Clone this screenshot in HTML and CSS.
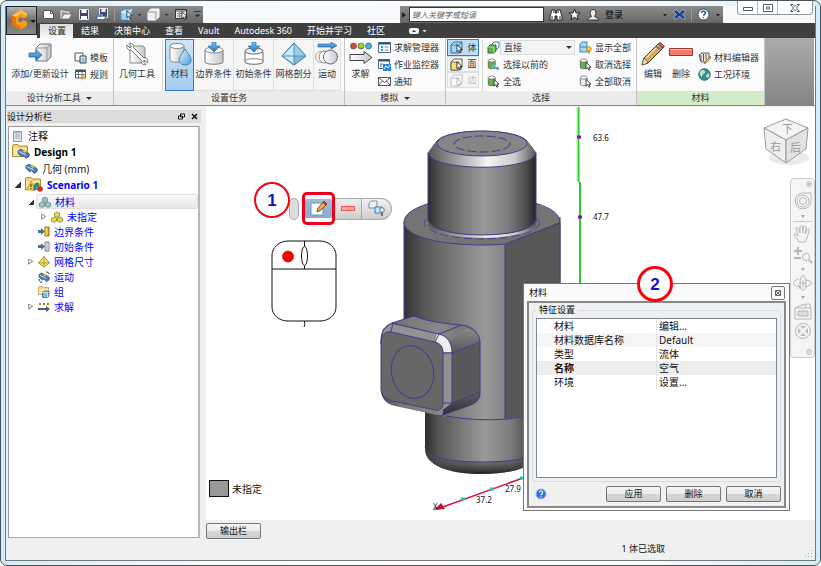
FILE: index.html
```html
<!DOCTYPE html>
<html lang="zh-CN">
<head>
<meta charset="utf-8">
<title>Design 1</title>
<link rel="stylesheet" href="styles.css">
</head>
<body>
<svg class="defs" aria-hidden="true">
  <defs>
    <linearGradient id="gm" x1="0" x2="1" y1="0" y2="0"><stop offset="0" stop-color="#fff"/><stop offset="1" stop-color="#c3c6cb"/></linearGradient>
    <linearGradient id="gb" x1="0" x2="0" y1="0" y2="1"><stop offset="0" stop-color="#7fc4f5"/><stop offset="1" stop-color="#1f74c4"/></linearGradient>
    <linearGradient id="gd" x1="0" x2="1" y1="0" y2="1"><stop offset="0" stop-color="#eaf7ff"/><stop offset="1" stop-color="#4c9fdc"/></linearGradient>
    <linearGradient id="gy" x1="0" x2="1" y1="0" y2="0"><stop offset="0" stop-color="#fff6a0"/><stop offset="1" stop-color="#d0a616"/></linearGradient>
    <symbol id="cursor" viewBox="0 0 8 11"><path d="M1 0.6v8l2-1.8 1.4 3.2 1.5-.7-1.4-3h2.6z" fill="#fff" stroke="#222" stroke-width="1"/></symbol>
    <symbol id="cubes" viewBox="0 0 12 12"><path d="M3 1l2.500 1.200v3L3 6.400.5 5.200v-3z" transform="translate(3 0)" fill="inherit" stroke="#5b6b2a" stroke-width=".6"/><path d="M3 6l2.500 1.200v3L3 11.400.5 10.200v-3z" fill="inherit" stroke="#5b6b2a" stroke-width=".6"/><path d="M9 6l2.500 1.200v3L9 11.400 6.500 10.200v-3z" fill="inherit" stroke="#5b6b2a" stroke-width=".6"/></symbol>
    <symbol id="part" viewBox="0 0 12 12"><path d="M1 3.500 3.500 2l6 3 2 1.500-.5 2.500-2.500 1.500L6 8 4.500 9 2.500 7.500 1 6z" fill="#4e7fae" stroke="#2c4f75" stroke-width=".7"/><path d="M5 4l2-1.500 2 1-1.500 2z" fill="#e8c92e"/><path d="M2 4.200l6 3.200" stroke="#b9d5ee" stroke-width="1"/></symbol>
    <symbol id="folder" viewBox="0 0 16 13"><path d="M.5 12.500V1.500L2 .5h4l1.500 1.500h8v10.500z" fill="#f5d27a" stroke="#b98b2e"/><path d="M1.500 4h13v7.500h-13z" fill="#fde9ae"/></symbol>
    <symbol id="db" viewBox="0 0 13 14"><path d="M1 3v8c0 2 8 2 8 0V3" fill="inherit" stroke="#555" stroke-width=".9"/><ellipse cx="5" cy="3" rx="4" ry="1.800" fill="#fff" stroke="#666" stroke-width=".9"/></symbol>
  </defs>
</svg>

<div class="window">
 <div class="frame">
  <header class="header">
    <button class="app-btn" aria-label="应用程序">
      <svg width="30" height="28" viewBox="0 0 30 28"><path d="M17 4.500 14 3 5 8.500V18l8.500 4.500L20 19v-4.500l-4-1.500-2.500 2.500-2-1.200V11l2-1.200L17 11.500l3-2V6.500L17 4.500z" fill="#f79a1c"/><path d="M5 8.500 9 10v7l4.500 2.500V22.500L5 18z" fill="#e8740c"/><path d="M9 10 14 6.500l6 2.500v-2.500L14 3 5 8.500z" fill="#ffc04a"/><path d="M23.500 13h5l-2.500 3z" fill="#111"/></svg>
    </button>
    <div class="titlebar">
      <div class="qat">
        <button aria-label="新建"><svg width="13" height="13" viewBox="0 0 13 13"><path d="M1.500 2.500h7l3 3v5h-10z" fill="#fff" stroke="#555"/><path d="M8.500 2.500v3h3" fill="none" stroke="#555"/></svg></button>
        <button aria-label="打开"><svg width="13" height="13" viewBox="0 0 13 13"><path d="M1 11V3h3l1 1h4v2" fill="#999" stroke="#eee"/><path d="M1 11l3-5h8l-3 5z" fill="#eee" stroke="#555" stroke-width=".6"/></svg></button>
        <button aria-label="保存"><svg width="13" height="13" viewBox="0 0 13 13"><path d="M1.500 1.500h9v10h-9z" fill="#3f4a5c" stroke="#e3e6ea"/><path d="M3.500 2h5v3h-5zM3 8h6v3H3z" fill="#fff"/></svg></button>
        <button aria-label="全部保存"><svg width="13" height="13" viewBox="0 0 13 13"><path d="M3.500.5h8v9h-8z" fill="#3f4a5c" stroke="#e3e6ea"/><path d="M5.500 1h4v3h-4z" fill="#fff"/><path d="M1 8h8v3.500H1z" fill="#fff" stroke="#23569b" stroke-width=".8"/><path d="M2 6h5v3H2z" fill="#5d8dc4"/></svg></button>
        <i class="qsep"></i>
        <button aria-label="体选择"><svg width="22" height="13" viewBox="0 0 22 13"><path d="M1 4l3-3h8v8l-3 3H1z" fill="#9fd6f8" stroke="#4393c8"/><path d="M1 4h8v8M9 4l3-3" fill="none" stroke="#fff"/><use href="#cursor" x="6" y="2" width="7" height="10"/><path d="M17.500 6h4l-2 2z" fill="#333"/></svg></button>
        <button aria-label="外观"><svg width="22" height="13" viewBox="0 0 22 13"><path d="M1 4l3-3h8v8l-3 3H1z" fill="#eee" stroke="#fff"/><path d="M1 4h8v8" fill="none" stroke="#999"/><path d="M17.500 6h4l-2 2z" fill="#333"/></svg></button>
        <button aria-label="表格"><svg width="14" height="13" viewBox="0 0 14 13"><path d="M1.500 1.500h11v9h-11z" fill="#eee" stroke="#333"/><path d="M2 3h10" stroke="#444"/><path d="M3 5.500h6M3 8h5M5.500 4v6" stroke="#888"/><use href="#cursor" x="7" y="3" width="7" height="10"/></svg></button>
        <button aria-label="自定义"><svg width="9" height="8" viewBox="0 0 9 8"><path d="M1 .5h7" stroke="#333"/><path d="M1 3h7L4.500 7z" fill="#333" stroke="#999" stroke-width=".5"/></svg></button>
      </div>
      <div class="infobar">
        <svg width="8" height="10" viewBox="0 0 8 10"><path d="M2 2l4 3-4 3z" fill="#222"/></svg>
        <input class="search" type="text" aria-label="搜索" placeholder="键入关键字或短语">
        <button aria-label="查找"><svg width="14" height="14" viewBox="0 0 14 14"><path d="M3 2h3v3h2V2h3l2 6v4H8V8H6v4H1V8z" fill="#fff" stroke="#222"/><path d="M3 8v3M11 8v3M4 4h1M9 4h1" stroke="#222"/></svg></button>
        <button aria-label="收藏"><svg width="13" height="13" viewBox="0 0 13 13"><path d="M6.500 1l1.500 4h4L9 7.500l1 4.200-3.500-2.500L3 11.700l1-4.200L1 5h4z" fill="#fff" stroke="#222"/></svg></button>
        <button aria-label="用户"><svg width="14" height="14" viewBox="0 0 14 14"><path d="M1.500 12c0-3 4-2 4-4C3 6 4 1.500 7 1.500S11 6 8.500 8c0 2 4 1 4 4z" fill="#eee" stroke="#333"/></svg></button>
        <button class="login">登录</button>
        <span class="grow"></span>
        <svg width="6" height="8" viewBox="0 0 6 8"><path d="M1 3h4L3 5.500z" fill="#222"/></svg>
        <button aria-label="Exchange"><svg width="13" height="13" viewBox="0 0 13 13"><path d="M1 2h3l2.500 3L9 2h3v2L9.500 6.500 12 9v2H9L6.500 8 4 11H1V9l2.500-2.500L1 4z" fill="#1d4496" stroke="#c6d2ea" stroke-width=".6"/></svg></button>
        <i class="qsep"></i>
        <button aria-label="帮助"><svg width="13" height="13" viewBox="0 0 13 13"><circle cx="6.500" cy="6.500" r="5.500" fill="#fff" stroke="#2d4567"/><path d="M4.500 5c0-2.500 4-2.300 4 0 0 1.400-2 1.300-2 2.800M6.500 9v1.300" fill="none" stroke="#24508f" stroke-width="1.400"/></svg></button>
        <svg width="6" height="8" viewBox="0 0 6 8"><path d="M1 3h4L3 5.500z" fill="#222"/></svg>
      </div>
      <div class="wincontrols">
        <button aria-label="最小化"><svg width="10" height="8"><path d="M.5 3.500h9v3h-9z" fill="#fff" stroke="#555a66"/></svg></button>
        <button aria-label="最大化"><svg width="10" height="8"><path d="M.5.500h9v7h-9zM3.500 3h3v2h-3z" fill="#fff" stroke="#555a66"/></svg></button>
        <button aria-label="关闭" class="wc-close"><svg width="10" height="8"><path d="M.5.500h2.500l2 2 2-2h2.500L6.500 4l3 3.500H7l-2-2-2 2H.5l3-3.500z" fill="#fff" stroke="#555a66"/></svg></button>
      </div>
    </div>
    <nav class="tabs">
      <a href="#" class="tab active">设置</a><a href="#" class="tab">结果</a><a href="#" class="tab">决策中心</a><a href="#" class="tab">查看</a><a href="#" class="tab">Vault</a><a href="#" class="tab">Autodesk 360</a><a href="#" class="tab">开始并学习</a><a href="#" class="tab">社区</a>
      <button class="tab-toggle" aria-label="折叠功能区"><svg width="18" height="8" viewBox="0 0 18 8"><rect x="0" y="1" width="10" height="6" rx="2" fill="#eee"/><path d="M3 5h4L5 3z" fill="#333"/><path d="M13.500 3h4l-2 2.500z" fill="#ddd"/></svg></button>
    </nav>
  </header>

  <div class="ribbon">
    <section class="panel">
      <div class="panel-body p-design">
        <button class="big wide"><svg width="24" height="24" viewBox="0 0 24 24"><path d="M8 6l4-4h11v13l-4 4H8z" fill="url(#gm)" stroke="#777"/><path d="M8 6h11v13M19 6l4-4" fill="none" stroke="#999"/><path d="M1 11h7V7.500l6 5.500-6 5.500V15H1z" fill="url(#gb)" stroke="#1a5a9c" stroke-width=".7"/></svg><span>添加/更新设计</span></button>
        <div class="list two">
          <button class="row"><svg width="13" height="13" viewBox="0 0 13 13"><path d="M1 2h8v8H1z" fill="#fff" stroke="#555"/><path d="M6 5h6v7H6z" fill="#d8e8f8" stroke="#345"/><path d="M7.500 8h3M7.500 10h3" stroke="#4c8ac5"/></svg>模板</button>
          <button class="row"><svg width="13" height="13" viewBox="0 0 13 13"><path d="M1.500 2h10v8h-10z" fill="#fff" stroke="#456"/><path d="M1 2h11v2H1z" fill="#456"/><path d="M2 6.500h9M4.500 4v6M8 4v6" stroke="#678"/><path d="M12 5L7 9h2l-2 4 5-4h-2z" fill="#f7a51c"/></svg>规则</button>
        </div>
      </div>
      <h2 class="panel-title">设计分析工具 <i class="caret"></i></h2>
    </section>
    <section class="panel">
      <div class="panel-body p-task">
        <button class="big tools"><svg width="24" height="24" viewBox="0 0 24 24"><path d="M5 4h13l2 2v13l-2 2H5z" fill="url(#gm)" stroke="#888"/><path d="M2 3l3 3 1.500-1.500L4 1.500c3-1 5 1 4.500 4L19 16c3-.5 4.500 2 3.500 5l-3-3-1.500 1.500 3 3c-3 1-5.500-1-4.500-4L6 8C3 8.500 1 6 2 3z" fill="#fff" stroke="#555" stroke-width=".8"/></svg><span>几何工具</span></button>
        <i class="vsep"></i>
        <button class="big tile mat on" aria-pressed="true"><svg width="24" height="24" viewBox="0 0 24 24"><path d="M2 4v14c0 3 14 3 14 0V4" fill="url(#gm)" stroke="#888"/><ellipse cx="9" cy="4" rx="7" ry="2.500" fill="#fff" stroke="#888"/><path d="M17 7c3 5 6 7 6 11s-3 5-6 5-6-2-6-5 3-6 6-11z" fill="url(#gd)" stroke="#3d82b8"/></svg><span>材料</span></button>
        <button class="big tile"><svg width="24" height="24" viewBox="0 0 24 24"><path d="M3 8v12c0 3 18 3 18 0V8" fill="url(#gm)" stroke="#777"/><ellipse cx="12" cy="8" rx="9" ry="3" fill="#fff" stroke="#888"/><path d="M10 0h4v4h4l-6 6-6-6h4z" fill="url(#gb)" stroke="#1a5a9c" stroke-width=".6"/></svg><span>边界条件</span></button>
        <button class="big tile"><svg width="24" height="24" viewBox="0 0 24 24"><path d="M3 10v10c0 3 18 3 18 0V10" fill="#fff" stroke="#666"/><ellipse cx="12" cy="9" rx="9" ry="3" fill="#eee" stroke="#666"/><path d="M3 19c0-3 18-3 18 0" fill="none" stroke="#888"/><path d="M10 0h4v4h4l-6 6-6-6h4z" fill="url(#gb)" stroke="#1a5a9c" stroke-width=".6"/></svg><span>初始条件</span></button>
        <button class="big tile"><svg width="26" height="24" viewBox="0 0 26 24"><path d="M13 1l12 13-12 9L1 14z" fill="#c9e8f8" stroke="#3f84b0"/><path d="M13 1l12 13H13z" fill="#9dcde8"/><path d="M13 14h12l-12 9z" fill="#7fb8d9"/><path d="M13 1v22M1 14h24M13 1l12 13-12 9L1 14z" fill="none" stroke="#3f84b0" stroke-width=".8"/></svg><span>网格剖分</span></button>
        <button class="big tile motion"><svg width="24" height="24" viewBox="0 0 24 24"><path d="M3 2h13V0l6 3.500-6 3.500V5H3z" fill="url(#gb)" stroke="#1a5a9c" stroke-width=".6"/><circle cx="6" cy="15" r="5.500" fill="none" stroke="#aaa"/><circle cx="10" cy="15" r="6" fill="#fff" stroke="#888"/><circle cx="15.500" cy="15" r="7" fill="url(#gm)" stroke="#666"/></svg><span>运动</span></button>
      </div>
      <h2 class="panel-title">设置任务</h2>
    </section>
    <section class="panel">
      <div class="panel-body p-sim">
        <button class="big solve"><svg width="24" height="24" viewBox="0 0 24 24"><circle cx="4.500" cy="4" r="3" fill="#e0493a" stroke="#555" stroke-width=".8"/><circle cx="12" cy="4" r="3" fill="#7ed321" stroke="#555" stroke-width=".8"/><circle cx="19.500" cy="4" r="3" fill="#3fb4e6" stroke="#555" stroke-width=".8"/><path d="M11 2a2 2 0 0 1 2 3" stroke="#fd3" fill="none"/><path d="M1 12.500h14v-3l8 6-8 6v-3H1z" fill="url(#gm)" stroke="#444"/></svg><span>求解</span></button>
        <div class="list">
          <button class="row"><svg width="13" height="13" viewBox="0 0 13 13"><path d="M.5 1.500h12v10H.5z" fill="#fff" stroke="#468"/><path d="M1 1.500h11v2H1z" fill="#357"/><path d="M3 6h2M3 9h2" stroke="#29d" stroke-width="2"/><path d="M6.500 6h4M6.500 9h4" stroke="#789"/></svg>求解管理器</button>
          <button class="row"><svg width="13" height="13" viewBox="0 0 13 13"><path d="M.5 1.500h11v9H.5z" fill="#fff" stroke="#468"/><path d="M1 1.500h11v2H1z" fill="#357"/><path d="M2 6h3M2 8h2" stroke="#468"/><path d="M5 6h8v7H5z" fill="#2b86dd"/><path d="M6 11l2-3 2 2 2-3" fill="none" stroke="#fff"/></svg>作业监控器</button>
          <button class="row"><svg width="13" height="13" viewBox="0 0 13 13"><path d="M.5 2.500h12v8H.5zM.5 2.500l6 5 6-5M.5 10.500l4-4.500M12.500 10.500l-4-4.500" fill="#fff" stroke="#444" stroke-width=".9"/></svg>通知</button>
        </div>
      </div>
      <h2 class="panel-title">模拟 <i class="caret"></i></h2>
    </section>
    <section class="panel">
      <div class="panel-body p-select">
        <div class="toggles">
          <button class="toggle on" aria-pressed="true"><svg width="14" height="13" viewBox="0 0 14 13"><path d="M1 4l3-3h8v8l-3 3H1z" fill="#9fd6f8" stroke="#2f6b99"/><path d="M1 4h8v8M9 4l3-3" fill="none" stroke="#2f6b99" stroke-width=".7"/><use href="#cursor" x="6" y="3" width="7" height="10"/></svg>体</button>
          <button class="toggle"><svg width="14" height="13" viewBox="0 0 14 13"><path d="M1 4l3-3h8v8l-3 3H1z" fill="#fff" stroke="#555"/><path d="M1 4h8v8H1z" fill="#f8dc6b" stroke="#555" stroke-width=".8"/><use href="#cursor" x="6" y="3" width="7" height="10"/></svg>面</button>
          <button class="toggle" disabled><svg width="14" height="13" viewBox="0 0 14 13"><path d="M1 4l3-3h8v8l-3 3H1z" fill="#fff" stroke="#bbb"/><path d="M1 4h8v8" fill="none" stroke="#bbb"/><path d="M7 4v8l2-2h3z" fill="#fff" stroke="#bbb"/></svg>边</button>
        </div>
        <i class="vsep"></i>
        <div class="list sel">
          <div class="row"><svg width="13" height="13" viewBox="0 0 13 13"><path d="M5 3l2-2h5v5l-2 2H5z" fill="none" stroke="#2f78b5"/><path d="M1 6l2-2h6v6l-2 2H1z" fill="#5fb54b" stroke="#2d6c22"/><path d="M1 6h6v6" fill="none" stroke="#c5eab9" stroke-width=".8"/></svg><select aria-label="选择方式"><option>直接</option></select></div>
          <button class="row"><svg width="13" height="13" viewBox="0 0 13 13"><use href="#db" width="12" height="12" fill="#62b24e"/><path d="M12 12V9H8V7L5 9.500 8 12v-1.500" fill="#2b86dd" stroke="#fff" stroke-width=".5"/></svg>选择以前的</button>
          <button class="row"><svg width="13" height="13" viewBox="0 0 13 13"><use href="#db" width="12" height="12" fill="#62b24e"/><use href="#cursor" x="6" y="4" width="7" height="9"/></svg>全选</button>
        </div>
        <div class="list">
          <button class="row"><svg width="13" height="13" viewBox="0 0 13 13"><path d="M1 3l2-2h5v10H1z" fill="#a8daf8" stroke="#3a84b8"/><path d="M1 6h7" stroke="#3a84b8"/><circle cx="10" cy="8" r="2.300" fill="#fc5" stroke="#d80"/><path d="M10 10v2.500" stroke="#777" stroke-width="1.500"/></svg>显示全部</button>
          <button class="row"><svg width="13" height="13" viewBox="0 0 13 13"><use href="#db" width="12" height="12" fill="#62b24e"/><use href="#cursor" x="6" y="4" width="7" height="9"/></svg>取消选择</button>
          <button class="row"><svg width="13" height="13" viewBox="0 0 13 13"><use href="#db" width="12" height="12" fill="#eee"/><use href="#cursor" x="6" y="4" width="7" height="9"/></svg>全部取消</button>
        </div>
      </div>
      <h2 class="panel-title">选择</h2>
    </section>
    <section class="panel">
      <div class="panel-body p-mat">
        <button class="big act"><svg width="24" height="24" viewBox="0 0 24 24"><path d="M1 23l2-7L17 2l5 4L7 21z" fill="#d9a860" stroke="#4a3a20"/><path d="M5 16L18 3" stroke="#f6dca8" stroke-width="1.500"/><path d="M17 2l2-1.500 4.500 4L22 6z" fill="#c66" stroke="#733"/><path d="M15 4l5 4" stroke="#777" stroke-width="2"/><path d="M3 16l4 5-6 2z" fill="#f6e6c8" stroke="#333" stroke-width=".6"/></svg><span>编辑</span></button>
        <button class="big act"><svg width="24" height="24" viewBox="0 0 24 24"><path d="M.5 6.500h23v7H.5z" fill="#fb7870" stroke="#8e3b35"/><path d="M1 7.500h22" stroke="#ffb0aa"/></svg><span>删除</span></button>
        <div class="list two">
          <button class="row"><svg width="13" height="13" viewBox="0 0 13 13"><path d="M1 4l3-2h7v6l-3 3H3z" fill="#eee" stroke="#555"/><path d="M3 4v6M5.500 3v7M8 3v6" stroke="#555"/><path d="M12.500 5L7 11l-1 2 2-1 5-5z" fill="#f3ab4a" stroke="#8a5618" stroke-width=".6"/></svg>材料编辑器</button>
          <button class="row"><svg width="13" height="13" viewBox="0 0 13 13"><circle cx="6.500" cy="6.500" r="5.700" fill="#3a8f9b" stroke="#245f73"/><path d="M2 4c2-3 5-2 5 0S4 6 4 8 1 7 2 4zM8 7l3-2c1 2 0 5-2 5z" fill="#bfe8c3"/></svg>工况环境</button>
        </div>
      </div>
      <h2 class="panel-title green">材料</h2>
    </section>
    <div class="ribbon-rest"></div>
  </div>

  <main class="main">
    <aside class="side">
      <div class="side-title"><span>设计分析栏</span><button aria-label="浮动"><svg width="7" height="7" viewBox="0 0 7 7"><path d="M2.500 1h4v3h-4zM.5 3h4v3h-4z" fill="#fff" stroke="#111"/></svg></button><button aria-label="关闭"><svg width="7" height="7" viewBox="0 0 7 7"><path d="M1 1l5 5M6 1L1 6" stroke="#111" stroke-width="1.500"/></svg></button></div>
      <ul class="tree">
        <li class="n l0"><svg width="12" height="12" viewBox="0 0 12 12"><path d="M1.500 1.500h8v10h-8z" fill="#e4ecf3" stroke="#8299ad"/><path d="M3 4h5M3 6h5M3 8h5M2 1v2M4 1v2M6 1v2M8 1v2" stroke="#7c93a8" stroke-width=".8"/></svg><span>注释</span></li>
        <li class="n l0 big-row"><svg width="18" height="16" viewBox="0 0 18 16"><use href="#folder" width="16" height="13"/><use href="#part" x="5" y="3" width="13" height="13"/></svg><b>Design 1</b></li>
        <li class="n l1"><svg width="13" height="13"><use href="#part" width="13" height="13"/></svg><span>几何 (mm)</span></li>
        <li class="n l1 big-row blue exp"><i class="open"></i><svg width="18" height="16" viewBox="0 0 18 16"><use href="#folder" width="16" height="13"/><path d="M6 4l4.500 9h-9z" fill="#ffd91c" stroke="#a67a00" stroke-width=".7"/><path d="M6 7v3M6 11v1" stroke="#222"/><circle cx="12" cy="8" r="2.500" fill="#259644"/><circle cx="15" cy="12" r="2.800" fill="#d22d22"/><path d="M9 6l3 6-4 2z" fill="#3478c0"/></svg><b>Scenario 1</b></li>
        <li class="n l2 blue exp sel"><i class="open"></i><span class="hl"><svg width="12" height="12" fill="#8cc4e8"><use href="#cubes" width="12" height="12"/></svg><span>材料</span></span></li>
        <li class="n l3 blue exp"><i class="closed"></i><svg width="12" height="12" fill="#ecd445"><use href="#cubes" width="12" height="12"/></svg><span>未指定</span></li>
        <li class="n l2 blue exp"><i></i><svg width="12" height="12" viewBox="0 0 12 12"><path d="M7 1h4v9H7z" fill="url(#gy)" stroke="#927200"/><path d="M0 4h3V2l4 3.500L3 9V7H0z" fill="#4b7290"/></svg><span>边界条件</span></li>
        <li class="n l2 blue exp"><i></i><svg width="12" height="12" viewBox="0 0 12 12"><path d="M7 1h4v9H7z" fill="#fff" stroke="#777"/><path d="M9 1v9" stroke="#999"/><path d="M0 4h3V2l4 3.500L3 9V7H0z" fill="#4b7290"/></svg><span>初始条件</span></li>
        <li class="n l2 blue exp"><i class="closed"></i><svg width="12" height="12" viewBox="0 0 12 12"><path d="M6 .500L11.500 7 6 11 .5 7z" fill="#f3e46a" stroke="#8a7a18" stroke-width=".8"/><path d="M6 .500V11M.5 7h11" stroke="#8a7a18" stroke-width=".6"/></svg><span>网格尺寸</span></li>
        <li class="n l2 blue exp"><i></i><svg width="12" height="12" viewBox="0 0 12 12"><use href="#part" width="12" height="12"/><path d="M8 1c2 0 3 1 3.500 2M1 8c0 2 1 3 3 3.500" fill="none" stroke="#234"/></svg><span>运动</span></li>
        <li class="n l2 blue exp"><i></i><svg width="12" height="12" viewBox="0 0 12 12"><use href="#folder" width="11" height="9"/><path d="M4.500 6.500l1.500-1.500h5v5l-1.500 1.500h-5z" fill="#83b9dd" stroke="#3d6d91" stroke-width=".8"/><path d="M4.500 6.500h5v5" fill="none" stroke="#e5f4ff" stroke-width=".7"/></svg><span>组</span></li>
        <li class="n l2 blue exp"><i class="closed"></i><svg width="12" height="12" viewBox="0 0 12 12"><path d="M1 3h2M5 3h2M9 3h2" stroke="#a58a20" stroke-width="2"/><path d="M0 7h8V5l4 3-4 3V9H0z" fill="#48616e"/></svg><span>求解</span></li>
      </ul>
    </aside>

    <div class="work">
      <div class="canvas">
        <svg class="scene" width="610" height="413" viewBox="206 107 610 413">
          <defs>
            <linearGradient id="cyl"><stop offset="0" stop-color="#2e2e2e"/><stop offset=".12" stop-color="#555"/><stop offset=".35" stop-color="#7e7e7e"/><stop offset=".52" stop-color="#999"/><stop offset=".75" stop-color="#7c7c7c"/><stop offset=".92" stop-color="#484848"/><stop offset="1" stop-color="#222"/></linearGradient>
            <linearGradient id="body"><stop offset="0" stop-color="#333"/><stop offset=".12" stop-color="#555"/><stop offset=".4" stop-color="#868686"/><stop offset=".52" stop-color="#999"/><stop offset=".65" stop-color="#858585"/></linearGradient>
            <linearGradient id="cham"><stop offset="0" stop-color="#555"/><stop offset=".3" stop-color="#aaa"/><stop offset=".55" stop-color="#f5f5f5"/><stop offset=".8" stop-color="#ccc"/><stop offset="1" stop-color="#555"/></linearGradient>
            <linearGradient id="fil" x1="0" x2="0" y1="0" y2="1"><stop offset="0" stop-color="#777" stop-opacity="0"/><stop offset=".7" stop-color="#333" stop-opacity=".6"/><stop offset="1" stop-color="#222"/></linearGradient>
            <linearGradient id="btop" x1="0" x2="1" y1="0" y2="0"><stop offset="0" stop-color="#444"/><stop offset=".2" stop-color="#777"/><stop offset=".6" stop-color="#888"/><stop offset=".85" stop-color="#777"/><stop offset="1" stop-color="#444"/></linearGradient>
            <linearGradient id="bside" x1="0" x2="0" y1="0" y2="1"><stop offset="0" stop-color="#8a8a8a"/><stop offset=".3" stop-color="#555"/><stop offset=".8" stop-color="#555"/><stop offset="1" stop-color="#2c2c2c"/></linearGradient>
          </defs>
          <path d="M578.500 107v75M580 182v105" stroke="#2cc82c" stroke-width="2"/>
          <path d="M577 107v75" stroke="#a9efa9"/>
          <path d="M577 137h4M578 217h4" stroke="#90c" stroke-width="3"/>
          <path d="M425 400v50c1 14 20 24 57 24s57-10 57-24v-50z" fill="url(#cyl)"/>
          <path d="M425 447c4 11 25 15 57 15s53-4 57-15v3c0 14-20 24-57 24s-56-10-57-24z" fill="url(#fil)"/>
          <path d="M425 447c4 11 25 15 57 15s53-4 57-15" class="edge"/>
          <path d="M404 222v170c10 20 40 28 78 28 45 0 78-8 78-25V224l-55 20z" fill="url(#body)"/>
          <path d="M505 244l55.500-27v175c-8 18-28 24-55.500 27z" fill="#585858"/>
          <path d="M404 222c0-14 34-25 78-25s78 11 78 25l-55 22c-10 1-16 1-23 1-44 0-78-9-78-23z" fill="#747474"/>
          <path d="M404 394V222c0-14 34-25 78-25s78 10 78 25v170M404 222c0 14 34 23 78 23 8 0 15 0 23-1l55-21M505 244v175M446 416c28 5 60 5 80 0" class="edge"/>
          <ellipse cx="482" cy="223" rx="57.500" ry="16" fill="#777" stroke="#443a90" stroke-width=".8" stroke-dasharray="9 3"/>
          <path d="M428 220c0 20 108 20 108 0v5c-6 17-102 17-108 0z" fill="url(#cham)"/>
          <path d="M428 153v67c2 10 24 15 54 15s52-5 54-15v-67z" fill="url(#cyl)"/>
          <path d="M428 222V153l9-12c10-13 80-13 90 0l9 12v69" fill="none" stroke="#443a90"/>
          <path d="M428 153l9-12h90l9 12c-4 19-104 19-108 0z" fill="url(#cham)"/>
          <ellipse cx="482" cy="143.500" rx="45" ry="12.500" fill="#858585" stroke="#443a90"/>
          <ellipse cx="482" cy="144" rx="28" ry="8" fill="none" stroke="#443a90" stroke-dasharray="9 3"/>
          <path d="M428 153c4 19 104 19 108 0M428 220c6 20 102 20 108 0" class="edge"/>
          <path d="M381 344c0-13 2-17 11-21l22-7c14 6 30 7 46 9 12 0 20 9 20 17v51c0 7-4 10-12 13l-25 9c-2 1-4 1-6 0l-42-9c-9-2-14-8-14-16z" fill="url(#btop)"/>
          <path d="M443 345l24-17c8 2 13 7 13 14v51c0 7-4 10-12 13l-25 9z" fill="url(#bside)"/>
          <path d="M452 353l28-10v51l-28 9z" fill="#595959"/>
          <path d="M392 324c-7 2-11 9-11 19l2 47 57 22 12-9v-50c-1-9-4-16-12-18z" fill="#929292"/>
          <path d="M437 334c9 1 14 7 15 18h-9c0-6-3-9-8-10z" fill="#ededed"/>
          <path d="M391 332l44 10c6 2 8 5 8 11v50c0 6-3 8-8 7l-42-9c-8-2-12-6-12-12v-47c0-7 4-11 10-10z" fill="#676767"/>
          <path d="M391 332l44 10c6 2 8 5 8 11v50c0 6-3 8-8 7l-42-9c-8-2-12-6-12-12v-47c0-7 4-11 10-10zM381 344c0-13 2-17 11-21l22-7c14 6 30 7 46 9 12 0 20 9 20 17v51c0 7-4 10-12 13l-25 9c-2 1-4 1-6 0M392 323l47 11c9 2 13 9 13 19v50l-10 12M439 334l23-9M452 353l28-11M452 403l28-11M443 353h9M443 403h9M391 332l2-9M435 342l4-8" class="edge"/>
          <ellipse cx="412.500" cy="372" rx="21" ry="26.500" fill="none" stroke="#443a90" transform="rotate(-12 412.500 372)"/>
          <path d="M523 478l-83 30" stroke="#d8123f" stroke-width="1.500"/><path d="M434 510l7-7 4 6z" fill="#c4122f"/>
          <path d="M490 489h4M461 499h4M520 478h4" stroke="#14c8c8" stroke-width="3"/>
          <g class="scale"><text x="593" y="141">63.6</text><text x="593" y="220">47.7</text><text x="476" y="503">37.2</text><text x="505" y="492">27.9</text><text x="433" y="510">X</text></g>
          <g stroke="#111" fill="#fff"><path d="M288 241h32c9 0 16 7 16 14v52c0 8-7 14-16 14h-32c-9 0-16-6-16-14v-52c0-7 7-14 16-14z"/><path d="M272 269h64M304.500 241v28M304.500 321q1 4-.500 6" fill="none"/><ellipse cx="304.500" cy="256" rx="3" ry="9.500"/><circle cx="288" cy="256.500" r="5.500" fill="#f00" stroke="#900" stroke-width=".6"/></g>
        </svg>

        <div class="mini">
          <span class="grip"></span>
          <button class="m-edit" aria-label="编辑材料"><svg width="17" height="17" viewBox="0 0 17 17"><path d="M1 3h12v12H1z" fill="#fff" stroke="#6f94be"/><path d="M14 1l3 3-6 6-4 2 1-4z" fill="#eeb04e" stroke="#4b3210" stroke-width=".8"/><path d="M14 1l3 3-1.500 1.500-3-3z" fill="#b33"/></svg></button>
          <button class="m-del" aria-label="删除材料"><svg width="14" height="5"><path d="M.5.500h13v4H.5z" fill="#fba19b" stroke="#e55"/></svg></button>
          <button class="m-more" aria-label="隐藏"><svg width="17" height="17" viewBox="0 0 17 17"><path d="M1 3l2-2h6v5L7 8H1z" fill="#eee" stroke="#888"/><path d="M7 7h7v6H7z" fill="#cfe8fb" stroke="#2d7fc2"/><circle cx="14" cy="10" r="2.300" fill="#eef8ff" stroke="#2d7fc2"/><path d="M14 12v4" stroke="#777" stroke-width="2"/></svg></button>
        </div>
        <span class="mark m1">1</span>

        <svg class="viewcube" width="50" height="52" viewBox="0 0 50 52"><ellipse cx="27" cy="41" rx="20" ry="7" fill="#ddd" opacity=".6"/><path d="M2 11L24 2l22 9-22 12z" fill="#f4f4f4" stroke="#999"/><path d="M2 11l22 12v23L4 32z" fill="#eee" stroke="#999"/><path d="M46 11L24 23v23l20-14z" fill="#e2e2e2" stroke="#999"/><text x="20" y="16">下</text><text x="8" y="34">右</text><text x="28" y="35">后</text></svg>

        <nav class="navbar" aria-label="导航栏">
          <svg class="tiny first" width="6" height="6" viewBox="0 0 6 6"><circle cx="3" cy="3" r="2.400"/><path d="M2 2l2 2M4 2L2 4"/></svg>
          <button aria-label="导航控制盘"><svg width="20" height="20" viewBox="0 0 20 20"><path d="M10 2h8v8a8 8 0 1 1-8-8z"/><circle cx="10" cy="10" r="6"/><circle cx="10" cy="10" r="3.500"/></svg></button>
          <i class="dn"></i><i class="line"></i>
          <button aria-label="平移"><svg width="20" height="20" viewBox="0 0 20 20"><path d="M6 18c-1-3-4-5-5-7 0-2 2-1 4 1L3 5c0-2 2-2 2.500 0L7 9V3c0-2 2.500-2 2.500 0v6l1-6c.5-2 2.500-1 2.500 1l-1 6 2-4c1-2 3-1 2 1l-2 7-2 4z"/></svg></button>
          <button aria-label="缩放"><svg width="20" height="18" viewBox="0 0 20 18"><path d="M5 1v8M1 5h8M1 12h7" stroke-width="2"/><circle cx="13" cy="11" r="3.500"/><path d="M16 14l3 3" stroke-width="2"/></svg></button>
          <i class="dn"></i>
          <button aria-label="动态观察"><svg width="20" height="18" viewBox="0 0 20 18"><path d="M6 5c-8 2-7 7 1 8M5 11l2 2-2 2M13 6c7 1 7 5 0 7"/><ellipse cx="10" cy="9" rx="3" ry="7.500"/><path d="M10 6v7M7 9h6"/></svg></button>
          <i class="dn"></i>
          <button aria-label="相机"><svg width="18" height="18" viewBox="0 0 18 18"><path d="M1 6h16v11H1zM1 6l10-4 1 4M12 2h4v4"/><path d="M4 9h10v5H4z" fill="#ddd"/></svg></button>
          <button aria-label="适合窗口"><svg width="18" height="18" viewBox="0 0 18 18"><circle cx="9" cy="9" r="7.500"/><path d="M6 4h6L9 7zM6 14h6l-3-3zM4 6v6l3-3zM14 6v6l-3-3z" fill="#bbb" stroke="none"/></svg></button>
          <svg class="tiny last" width="6" height="6" viewBox="0 0 6 6"><circle cx="3" cy="3" r="2.400"/><path d="M2 3h2"/></svg>
        </nav>

        <div class="legend"><span class="swatch"></span>未指定</div>

        <div class="dialog" role="dialog" aria-label="材料">
          <div class="dlg-title"><span>材料</span><button aria-label="关闭"><svg width="6" height="6" viewBox="0 0 6 6"><path d="M.5.500h5v5h-5zM1 1l4 4M5 1L1 5" fill="none" stroke="#333b4d" stroke-width=".8"/></svg></button></div>
          <div class="dlg-body">
            <fieldset><legend>特征设置</legend>
              <div class="props"><table>
                <tr><th scope="row">材料</th><td>编辑...</td></tr>
                <tr><th scope="row">材料数据库名称</th><td>Default</td></tr>
                <tr><th scope="row">类型</th><td>流体</td></tr>
                <tr class="cur"><th scope="row">名称</th><td>空气</td></tr>
                <tr><th scope="row">环境</th><td>设置...</td></tr>
              </table></div>
            </fieldset>
            <div class="dlg-foot"><svg width="12" height="12" viewBox="0 0 12 12"><circle cx="6" cy="6" r="5" fill="#2f6fdc" stroke="#9bb8e6"/><path d="M4.500 4.500c0-2 3.200-2 3.200 0C7.700 6 6 6 6 7.200M6 8.300v1.200" fill="none" stroke="#fff" stroke-width="1.200"/></svg><span class="grow"></span><button class="btn">应用</button><button class="btn">删除</button><button class="btn">取消</button></div>
          </div>
        </div>
        <span class="mark m2">2</span>
      </div>
      <div class="out"><button class="btn">输出栏</button></div>
    </div>
  </main>
  <footer class="status"><span>1 体已选取</span><svg width="8" height="8" viewBox="0 0 8 8"><path d="M6 0h1v1H6zM6 3h1v1H6zM3 3h1v1H3zM6 6h1v1H6zM3 6h1v1H3zM0 6h1v1H0z" fill="#aaa"/></svg></footer>
 </div>
</div>
</body>
</html>
```
FILE: styles.css
```css
* { box-sizing: border-box; }
body { margin: 0; font: 9px/12px "Noto Sans", "Noto Sans CJK SC", sans-serif; color: #333; background: #fff; }
button { font: inherit; color: inherit; background: none; border: 0; padding: 0; margin: 0; display: flex; align-items: center; justify-content: center; }
svg { display: block; flex: none; }
i { font-style: normal; flex: none; }
.defs { position: absolute; width: 0; height: 0; }
.grow { flex: 1; }

.window { min-height: 100vh; display: flex; flex-direction: column; padding: 5px 4px 4px; border: 1px solid #4d5358; border-radius: 7px; background: linear-gradient(90deg, #cfeefa, #f6fafc 25%, #fdfdfd 50%, #f6fafc 80%, #cfeefa); }
.frame { flex: 1; display: flex; flex-direction: column; border: 1px solid #777; border-top: 0; background: #f0f0f0; }

/* title bar and tabs */
.header { display: grid; grid-template-columns: 31px 1fr; grid-template-rows: 17px 15px; background: #f7f9fa; }
.app-btn { grid-row: span 2; background: linear-gradient(#b5b5b5, #6e6e6e 50%, #8a8a8a); border: 1px solid #222; margin-bottom: 3px; z-index: 1; }
.titlebar { display: flex; min-width: 0; }
.qat { display: flex; align-items: center; gap: 5px; padding: 0 1px 0 5px; background: linear-gradient(#8c8c8c, #666); }
.qsep { width: 1px; height: 12px; background: #999; }
.infobar { display: flex; align-items: center; gap: 5px; width: 323px; margin-left: auto; padding-right: 2px; background: linear-gradient(#8c8c8c, #666); }
.infobar > svg:first-child { margin-right: -4px; }
.search { width: 135px; height: 15px; border: 1px solid #333; background: #fff; padding: 0 2px; font: italic 8px/13px "Noto Sans", "Noto Sans CJK SC", sans-serif; }
.search::placeholder { color: #666; opacity: 1; }
.login { color: #000; }
.wincontrols { display: flex; align-self: flex-start; height: 14px; margin: -5px 2px 0 14px; border: 1px solid #8f979f; border-top: 0; border-radius: 0 0 4px 4px; background: #fff; }
.wincontrols button { width: 20px; border-right: 1px solid #b5bbc1; }
.wincontrols .wc-close { width: 34px; border: 0; }
.tabs { display: flex; background: #3f3f3f; padding-left: 3px; }
.tab { font-size: 9px; line-height: 15px; padding: 0 7px 0 8px; color: #fff; text-decoration: none; }
.tab.active { background: linear-gradient(#ddd, #f7f7f7); color: #222; margin-top: 1px; line-height: 14px; }
.tab-toggle { margin-left: 17px; }

/* ribbon */
.ribbon { display: flex; height: 68px; background: #fff; border-bottom: 1px solid #888; flex: none; }
.panel { display: flex; flex-direction: column; border-right: 1px solid #c3c3c3; background: #fbfbfb; }
.panel-body { display: flex; flex: 1; padding-top: 1px; }
.panel-title { margin: 0; height: 14px; font-size: 9px; font-weight: 400; line-height: 14px; text-align: center; background: #ececec; }
.panel-title.green { background: #d3ebc8; }
.caret { display: inline-block; margin-left: 3px; border: 3px solid transparent; border-top-color: #333; border-bottom: 0; vertical-align: middle; }
.big { flex-direction: column; justify-content: flex-start; gap: 2px; padding-top: 3px; white-space: nowrap; }
.big.wide { width: 66px; }
.big.tools { width: 46px; }
.vsep { width: 1px; background: #d5d5d5; margin: 0 2px; }
.tile { width: 40px; border: 1px solid #e0e0e0; border-left: 0; background: #f5f5f5; padding-top: 2px; }
.tile.mat { width: 29px; }
.tile.motion { width: 27px; }
.tile.on { border: 1px solid #2d7cc4; background: linear-gradient(#cde4f8, #a3cdf0); }
.solve { width: 31px; }
.act { width: 28px; }
.list { display: grid; grid-template-rows: 17px 17px 17px; align-content: start; padding-left: 2px; }
.list.two { grid-template-rows: 17px 17px; padding-top: 10px; }
.row { display: flex; justify-content: flex-start; align-items: center; gap: 3px; white-space: nowrap; }
.p-design { padding: 1px 5px 0 1px; }
.p-design .list { padding-left: 1px; }
.p-task { padding-right: 3px; }
.p-sim { padding-right: 6px; }
.p-select { padding-right: 5px; padding-left: 1px; }
.p-select .vsep { margin: 0 3px; }
.p-mat { padding-left: 2px; padding-right: 5px; }
.p-mat .list { padding-left: 3px; }
.list.sel { width: 91px; padding-left: 1px; }
.list.sel select { width: 75px; height: 15px; font: inherit; color: #333; padding: 0 3px; border: 1px solid #ddd; appearance: none; background: #f4f4f4; }
.list.sel .row:first-child { position: relative; gap: 0; }
.list.sel .row:first-child::after { content: ""; position: absolute; right: 5px; top: 7px; border: 3px solid transparent; border-top-color: #333; border-bottom: 0; pointer-events: none; }
.toggles { display: grid; grid-template-rows: 17px 16px 16px; align-content: start; }
.toggle { width: 32px; gap: 4px; border: 1px solid #ddd; background: #f5f5f5; }
.toggle.on { border-color: #2d7cc4; background: #bfdcf5; }
.toggle:disabled { color: #bbb; }
.ribbon-rest { flex: 1; margin-right: 1px; background: linear-gradient(#ababab, #858585); }

/* main area */
.main { flex: 1; display: flex; min-height: 0; }
.side { flex: none; width: 200px; padding: 4px 5px 0 1px; display: flex; flex-direction: column; }
.side-title { display: flex; align-items: center; gap: 6px; height: 13px; background: #dcdcdc; padding-right: 3px; color: #111; }
.side-title span { flex: 1; }
.tree { list-style: none; flex: 1; margin: 3px 1px 0 1px; padding: 1px 0 0; border: 1px solid #9a9a9a; border-right: 2px solid #b5b8c2; border-bottom-color: #aab; background: #fff; font-size: 10px; color: #111; }
.n { display: flex; align-items: center; height: 15px; gap: 4px; white-space: nowrap; }
.big-row { height: 18px; }
.big-row b { font-size: 10px; color: #000; }
.blue, .blue b { color: #00f; }
.l0 { padding-left: 3px; }
.l1 { padding-left: 16px; }
.l1.exp { padding-left: 6px; }
.l2 { padding-left: 19px; }
.l3 { padding-left: 32px; }
.exp i { width: 6px; height: 6px; }
.open { background: linear-gradient(135deg, transparent 50%, #333 50%); }
.closed { background: #999; clip-path: polygon(0 0, 18% 0, 90% 50%, 18% 100%, 0 100%, 0 75%, 18% 75%, 60% 50%, 18% 20%, 18% 80%, 0 80%); }
.hl { flex: 1; display: flex; align-items: center; gap: 4px; height: 15px; margin-left: -2px; padding-left: 2px; border: 1px solid #ddd; border-radius: 2px; background: linear-gradient(#fafafa, #e6e6e6); }

.work { flex: 1; min-width: 0; display: flex; flex-direction: column; }
.canvas { position: relative; flex: 1; margin-top: 1px; background: #fff; overflow: hidden; }
.scene { position: absolute; left: 0; top: 0; }
.edge { fill: none; stroke: #443a90; stroke-width: 1; }
.scale { font-size: 8px; fill: #111; }
.mini { position: absolute; left: 83px; top: 85px; display: flex; align-items: center; }
.grip { width: 10px; height: 22px; border: 1px solid #aaa; border-radius: 5px; background: #ddd; margin-right: 3px; }
.m-edit { width: 33px; height: 33px; border: 3px solid #f00018; border-radius: 5px; background: linear-gradient(#a9bfdb, #86a4c8); background-clip: padding-box; box-shadow: inset 0 4px #fff, inset 0 -4px #fff; }
.m-del { width: 27px; height: 22px; background: linear-gradient(#eee, #ccc); border: 1px solid #aaa; border-left: 0; }
.m-more { width: 30px; height: 22px; background: linear-gradient(#f2f2f2, #ccc); border: 1px solid #aaa; border-left: 0; border-radius: 0 11px 11px 0; }
.mark { position: absolute; width: 36px; height: 36px; border: 2px solid #f8000c; border-radius: 50%; background: #fff; color: #1111c8; font: bold 17px/33px "Liberation Sans", sans-serif; text-align: center; }
.m1 { left: 48px; top: 75px; }
.m2 { left: 431px; top: 159px; border-width: 3px; line-height: 31px; }
.viewcube { position: absolute; right: 3px; top: 10px; }
.viewcube text { font-size: 11px; fill: #999; }
.navbar { position: absolute; right: 0; top: 71px; width: 25px; height: 180px; display: flex; flex-direction: column; align-items: center; gap: 2px; padding: 2px; border: 1px solid #ccc; border-radius: 4px; background: #f5f5f5; }
.navbar svg { fill: none; stroke: #b5b5b5; stroke-width: 1; }
.tiny { align-self: flex-end; }
.tiny.first { margin-bottom: 2px; }
.tiny.last { margin-top: auto; }
.dn { border: 2px solid transparent; border-top: 3px solid #aaa; border-bottom: 0; margin: 2px 1px 1px; }
.line { width: 100%; height: 1px; background: #ccc; }
.legend { position: absolute; left: 3px; bottom: 23px; display: flex; align-items: center; gap: 3px; font-size: 10px; color: #111; }
.swatch { width: 20px; height: 17px; border: 1px solid #111; background: #999; }

.dialog { position: absolute; left: 317px; top: 176px; width: 267px; height: 228px; display: flex; flex-direction: column; padding: 0 3px 2px; border: 1px solid #777; background: #fafafa; color: #111; }
.dlg-title { display: flex; align-items: center; height: 17px; padding: 1px 1px 0 2px; }
.dlg-title span { flex: 1; }
.dlg-title button { width: 14px; height: 14px; border: 1px solid #777; border-radius: 2px; }
.dlg-body { flex: 1; display: flex; flex-direction: column; border: 2px solid #888; background: #f0f0f0; padding: 1px 3px 4px; }
fieldset { flex: 1; display: flex; margin: 0; padding: 2px 3px 3px; border: 1px solid #d3dde6; border-radius: 3px; min-width: 0; }
legend { padding: 0 3px; line-height: 12px; }
.props { flex: 1; height: 100%; border: 1px solid #828790; background: #fff; }
table { width: 100%; border-collapse: collapse; font-size: 10px; }
th, td { height: 14px; padding: 0 2px; line-height: 13px; text-align: left; font-weight: 400; white-space: nowrap; }
th { width: 50%; padding-left: 17px; border-right: 1px solid #e3e3e3; }
tr:nth-child(even) { background: #f5f5f5; }
tr.cur { background: #ededed; }
.cur th { font-weight: 700; }
.dlg-foot { display: flex; align-items: center; gap: 5px; padding: 4px 0 0 3px; }
.btn { width: 55px; height: 16px; border: 1px solid #777; border-radius: 2px; background: linear-gradient(#f5f5f5, #ebebeb 50%, #d6d6d6 50%, #cfcfcf); color: #111; }
.out { height: 18px; padding-top: 3px; }
.status { height: 22px; flex: none; display: flex; align-items: center; justify-content: flex-end; color: #111; }
.status span { margin-right: 140px; }
.status svg { align-self: flex-end; margin: 0 2px 2px 0; }
```
